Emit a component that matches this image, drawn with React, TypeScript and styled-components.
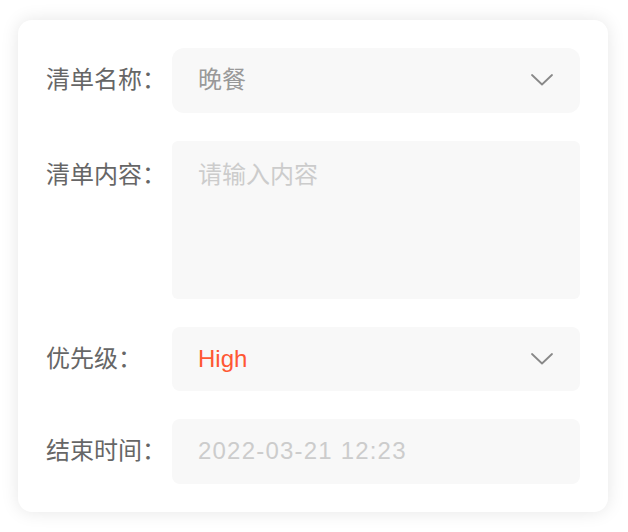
import React from "react";
import styled, { createGlobalStyle } from "styled-components";

const GlobalStyle = createGlobalStyle`
  html, body {
    margin: 0;
    padding: 0;
    background: #fff;
  }

  body {
    font-family: "Liberation Sans", "Noto Sans CJK SC", sans-serif;
  }
`;

const Page = styled.div`
  padding: 20px 20px 20px 18px;
`;

const Card = styled.form`
  width: 590px;
  box-sizing: border-box;
  padding: 28px;
  background: #fff;
  border-radius: 14px;
  box-shadow: 0 0 18px rgba(0, 0, 0, 0.1);
  display: grid;
  grid-template-columns: 126px 1fr;
  row-gap: 28px;
`;

type AlignProps = { $top?: boolean };

const Label = styled.label<AlignProps>`
  display: flex;
  align-items: ${(p) => (p.$top ? "flex-start" : "center")};
  padding-top: ${(p) => (p.$top ? "18px" : "0")};
  font-size: 24px;
  line-height: 32px;
  color: #666;
  white-space: nowrap;
`;

type FieldProps = { $radius?: number };

const Field = styled.div<FieldProps>`
  height: 64.5px;
  box-sizing: border-box;
  padding: 0 27px 0 26px;
  border-radius: ${(p) => p.$radius ?? 8}px;
  background: #f8f8f8;
  display: flex;
  align-items: center;
  justify-content: space-between;
`;

type ValueProps = { $tone: "value" | "placeholder" | "accent"; $spaced?: boolean };

const toneColor = {
  value: "#999",
  placeholder: "#ccc",
  accent: "#ff5733",
};

const Value = styled.span<ValueProps>`
  font-size: 24px;
  line-height: 32px;
  color: ${(p) => toneColor[p.$tone]};
  letter-spacing: ${(p) => (p.$spaced ? "1.2px" : "0")};
`;

const TextArea = styled.textarea`
  height: 158px;
  box-sizing: border-box;
  padding: 18px 26px;
  border: none;
  outline: none;
  resize: none;
  border-radius: 6px;
  background: #f8f8f8;
  font-family: inherit;
  font-size: 24px;
  line-height: 32px;
  color: #999;

  &::placeholder {
    color: #ccc;
  }
`;

const Chevron = () => (
  <svg width="22" height="12" viewBox="0 0 22 12" fill="none">
    <path
      d="M1 1 L11 10.5 L21 1"
      stroke="#888"
      strokeWidth="1.8"
      strokeLinecap="round"
      strokeLinejoin="round"
    />
  </svg>
);

export default function App() {
  return (
    <>
      <GlobalStyle />
      <Page>
        <Card>
          <Label>清单名称：</Label>
          <Field $radius={12}>
            <Value $tone="value">晚餐</Value>
            <Chevron />
          </Field>

          <Label $top>清单内容：</Label>
          <TextArea placeholder="请输入内容" />

          <Label>优先级：</Label>
          <Field>
            <Value $tone="accent">High</Value>
            <Chevron />
          </Field>

          <Label>结束时间：</Label>
          <Field>
            <Value $tone="placeholder" $spaced>
              2022-03-21 12:23
            </Value>
          </Field>
        </Card>
      </Page>
    </>
  );
}
